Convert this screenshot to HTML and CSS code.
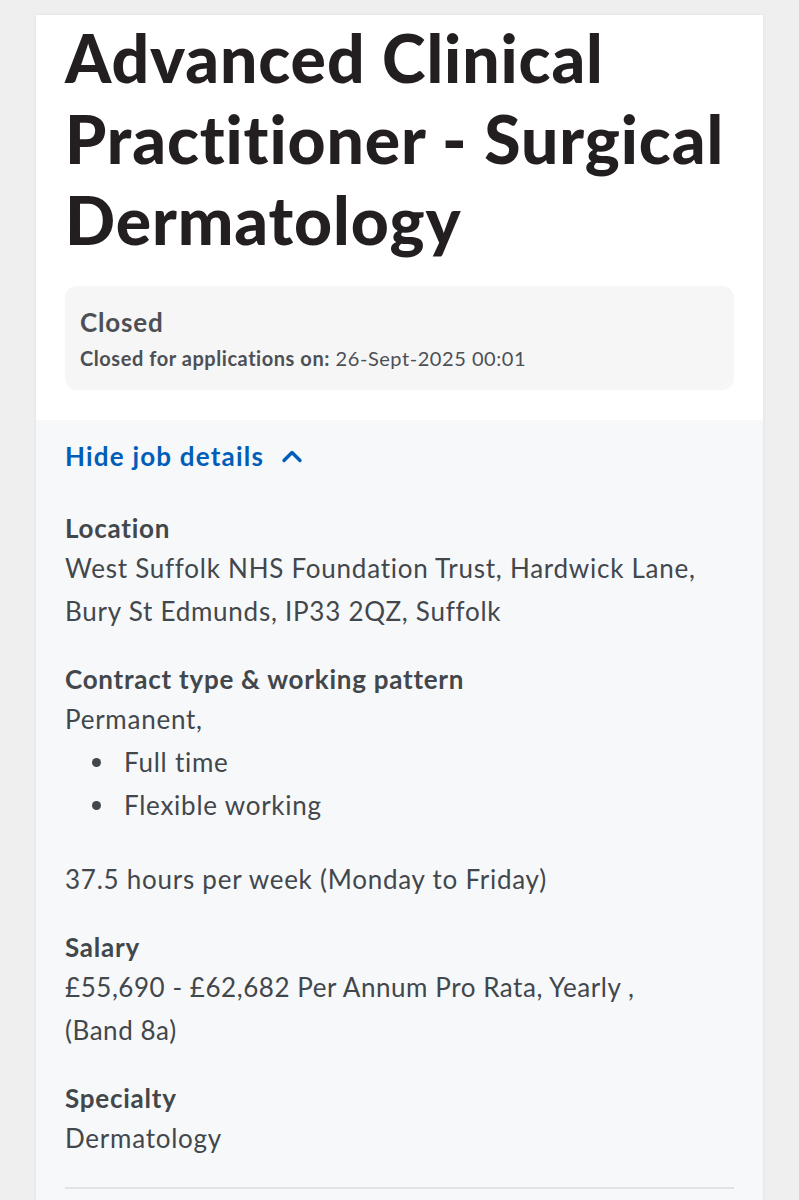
FILE: index.html
```html
<!DOCTYPE html>
<html lang="en">
<head>
    <meta charset="UTF-8">
    <meta name="viewport" content="width=device-width, initial-scale=1.0">
    <title>Advanced Clinical Practitioner - Surgical Dermatology</title>
    <link rel="stylesheet" href="styles.css">
</head>
<body>
    <div class="page">
        <main class="card">
            <div class="card-top">
                <h1 class="job-title">Advanced Clinical Practitioner - Surgical Dermatology</h1>

                <div class="status-box">
                    <p class="status">Closed</p>
                    <p class="status-date"><strong>Closed for applications on:</strong> 26-Sept-2025 00:01</p>
                </div>
            </div>

            <section class="details">
                <a href="#" class="toggle">Hide job details
                    <svg width="22" height="14" viewBox="0 0 22 14" aria-hidden="true">
                        <path d="M3 11.5l8-8 8 8" fill="none" stroke="currentColor" stroke-width="3.4" stroke-linecap="round" stroke-linejoin="round"/>
                    </svg>
                </a>

                <dl>
                    <dt>Location</dt>
                    <dd>West Suffolk NHS Foundation Trust, Hardwick Lane, Bury St Edmunds, IP33 2QZ, Suffolk</dd>

                    <dt>Contract type &amp; working pattern</dt>
                    <dd>
                        Permanent,
                        <ul>
                            <li>Full time</li>
                            <li>Flexible working</li>
                        </ul>
                        <p class="hours">37.5 hours per week (Monday to Friday)</p>
                    </dd>

                    <dt>Salary</dt>
                    <dd class="salary">£55,690 - £62,682 Per Annum Pro Rata, Yearly ,<br>(Band 8a)</dd>

                    <dt>Specialty</dt>
                    <dd>Dermatology</dd>
                </dl>

                <hr>
            </section>
        </main>
    </div>
</body>
</html>
```

FILE: styles.css
```css
body {
    margin: 0;
    padding: 0;
    background-color: #efefef;
    font-family: "Source Sans Pro", Lato, "Noto Sans", sans-serif;
    color: #42474c;
}
.page {
    padding: 15px 36px 0 36px;
}
.card {
    background-color: #ffffff;
    box-shadow: 0 0 4px rgba(0,0,0,0.06);
}
.card-top {
    padding: 2px 29px 30px 29px;
}
.job-title {
    font-size: 66px;
    line-height: 81px;
    font-weight: 900;
    color: #231f20;
    margin: 0 0 26px 0;
    letter-spacing: 0.9px;
}
.status-box {
    background-color: #f6f6f6;
    border-radius: 12px;
    padding: 18px 15px 14px 15px;
}
.status-box p {
    margin: 0;
}
.status {
    font-size: 26px;
    font-weight: bold;
    line-height: 36px;
    color: #4c5055;
    letter-spacing: 0.8px;
}
.status-date {
    font-size: 20px;
    line-height: 36px;
    color: #4c5055;
    letter-spacing: 0.55px;
}
.details {
    background-color: #f7f8fa;
    padding: 18px 29px 40px 29px;
}
.toggle {
    display: inline-flex;
    align-items: center;
    gap: 17px;
    color: #005eb8;
    font-weight: bold;
    font-size: 26px;
    line-height: 36px;
    letter-spacing: 1.2px;
    text-decoration: none;
}
dl {
    margin: 35px 0 0 0;
    font-size: 26px;
    line-height: 43px;
    letter-spacing: 0.75px;
}
dt {
    font-weight: bold;
    line-height: 38px;
}
dd {
    margin: 0 0 27px 0;
}
.salary {
    letter-spacing: 0.55px;
}
ul {
    margin: 0;
    padding-left: 59px;
    list-style: none;
}
li {
    position: relative;
}
li::before {
    content: "";
    position: absolute;
    left: -32px;
    top: 17px;
    width: 9px;
    height: 9px;
    border-radius: 50%;
    background-color: #42474c;
}
.hours {
    margin: 31px 0 0 0;
}
hr {
    border: none;
    border-top: 2px solid #dfe3e6;
    margin: 22px 0 0 0;
}
```
